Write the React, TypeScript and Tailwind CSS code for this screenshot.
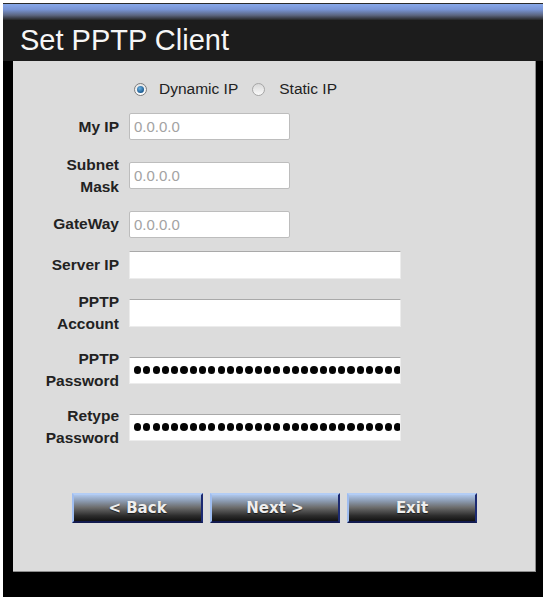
import React from "react";

const sans = "font-['Liberation_Sans',Arial,sans-serif]";

type Row = {
  label: string[];
  h: string;
  kind: "ip" | "text" | "password";
};

const rows: Row[] = [
  { label: ["My IP"], h: "h-[41px]", kind: "ip" },
  { label: ["Subnet", "Mask"], h: "h-[57px]", kind: "ip" },
  { label: ["GateWay"], h: "h-[40px]", kind: "ip" },
  { label: ["Server IP"], h: "h-[41px]", kind: "text" },
  { label: ["PPTP", "Account"], h: "h-[56px]", kind: "text" },
  { label: ["PPTP", "Password"], h: "h-[58px]", kind: "password" },
  { label: ["Retype", "Password"], h: "h-[56px]", kind: "password" },
];

function Radio({ checked }: { checked?: boolean }) {
  return (
    <span
      className={
        "flex h-[13px] w-[13px] shrink-0 items-center justify-center rounded-full border " +
        (checked
          ? "border-[#7d7d7d] bg-[linear-gradient(to_bottom,#e6e6e6,#ffffff)]"
          : "border-[#a6a6a6] bg-[linear-gradient(to_bottom,#d9d9d9,#fafafa)]")
      }
    >
      {checked && (
        <span className="h-[7px] w-[7px] rounded-full bg-[radial-gradient(circle_at_40%_35%,#6ab0e0,#1d5c92_70%)]" />
      )}
    </span>
  );
}

function Field({ kind }: { kind: Row["kind"] }) {
  if (kind === "ip") {
    return (
      <input
        readOnly
        defaultValue="0.0.0.0"
        className={`${sans} h-[27px] w-[161px] rounded-[2px] border border-[#bdbdbd] bg-white px-[4px] text-[15px] text-[#a3a3a3] outline-none`}
      />
    );
  }
  if (kind === "text") {
    return (
      <input
        readOnly
        className={`${sans} h-[28px] w-[272px] border border-[#ececec] border-t-[#a9a9a9] bg-white px-[4px] text-[15px] outline-none`}
      />
    );
  }
  // password field: dots as a filled row, clipped on the right like the original
  return (
    <div className="flex h-[27px] w-[272px] items-center gap-[2.1px] overflow-hidden border border-[#ececec] border-t-[#a9a9a9] bg-white pl-[4px]">
      {Array.from({ length: 30 }).map((_, i) => (
        <span key={i} className="h-[7.2px] w-[7.2px] shrink-0 rounded-full bg-[#050505]" />
      ))}
    </div>
  );
}

function NavButton({ label, w }: { label: string; w: string }) {
  return (
    <button
      className={`${w} h-[30px] border-2 border-t-[#b3cdf5] border-l-[#9fbdf0] border-r-[#1c2a72] border-b-[#121a4e] bg-[linear-gradient(to_bottom,#aec6ea_0%,#8d9db4_22%,#6c6c6c_48%,#2c2c2c_80%,#121212_100%)] font-['DejaVu_Sans',Verdana,sans-serif] text-[15px] font-bold text-[#eeeeee] [text-shadow:0_1px_1px_rgba(0,0,0,0.6)]`}
    >
      {label}
    </button>
  );
}

export default function App() {
  return (
    <div className={`${sans} h-[601px] w-[543px] overflow-hidden bg-white pl-[3px] pt-[3px]`}>
      <div className="flex h-[594px] w-[540px] flex-col bg-black">
        {/* glossy blue strip */}
        <div className="h-[17px] border-t border-[#2a2a2a] bg-[linear-gradient(to_bottom,#88a8ea_0%,#7894d4_35%,#5c6680_70%,#262626_100%)]" />

        {/* title bar */}
        <div className="flex h-[41px] items-center bg-[#1c1c1c] pl-[17px]">
          <h1 className="text-[29px] leading-none text-[#f6f6f6]">Set PPTP Client</h1>
        </div>

        <div className="flex pl-[10px]">
          <div className="flex h-[511px] w-[523px] flex-col border-b border-r border-[#8c8c8c] bg-[#dcdcdc] pt-[16px]">
            {/* connection type */}
            <div className="flex h-[24px] items-center pl-[121px] text-[15.5px] text-[#222]">
              <Radio checked />
              <span className="ml-[12px]">Dynamic IP</span>
              <span className="ml-[14px]">
                <Radio />
              </span>
              <span className="ml-[14px]">Static IP</span>
            </div>

            <div className="mt-[5px] flex flex-col">
              {rows.map((r) => (
                <div key={r.label.join(" ")} className={`flex ${r.h} items-center`}>
                  <div className="w-[106px] text-right text-[15.5px] font-bold leading-[22px] text-[#222]">
                    {r.label.map((l) => (
                      <div key={l}>{l}</div>
                    ))}
                  </div>
                  <div className="ml-[10px]">
                    <Field kind={r.kind} />
                  </div>
                </div>
              ))}
            </div>

            <div className="mt-[38px] flex gap-[7px] pl-[59px]">
              <NavButton label="< Back" w="w-[131px]" />
              <NavButton label="Next >" w="w-[130px]" />
              <NavButton label="Exit" w="w-[130px]" />
            </div>
          </div>
        </div>
      </div>
    </div>
  );
}
